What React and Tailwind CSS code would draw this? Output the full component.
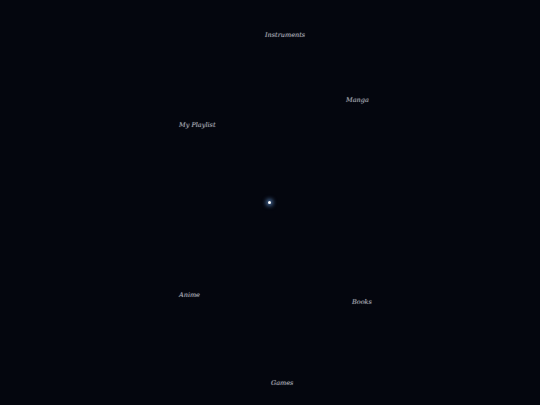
export default function App() {
  const labels = [
    { t: "Instruments", x: 265, y: 35 },
    { t: "Manga", x: 346, y: 100 },
    { t: "My Playlist", x: 179, y: 125 },
    { t: "Anime", x: 179, y: 295 },
    { t: "Books", x: 352, y: 302 },
    { t: "Games", x: 271, y: 383 },
  ];
  return (
    <div className="relative w-[540px] h-[405px] overflow-hidden bg-[#04060e]">
      {labels.map((l) => (
        <span
          key={l.t}
          className="absolute -translate-y-1/2 whitespace-nowrap text-[6.5px] leading-none italic text-[#a6a9b2] [font-family:'DejaVu_Serif',serif] [text-shadow:0_0_1px_rgba(200,205,220,0.5)]"
          style={{ left: l.x, top: l.y }}
        >
          {l.t}
        </span>
      ))}
      <div className="absolute left-[268px] top-[201px] w-[3px] h-[3px] rounded-full bg-white shadow-[0_0_4px_2px_rgba(120,180,255,0.6)]" />
    </div>
  );
}
